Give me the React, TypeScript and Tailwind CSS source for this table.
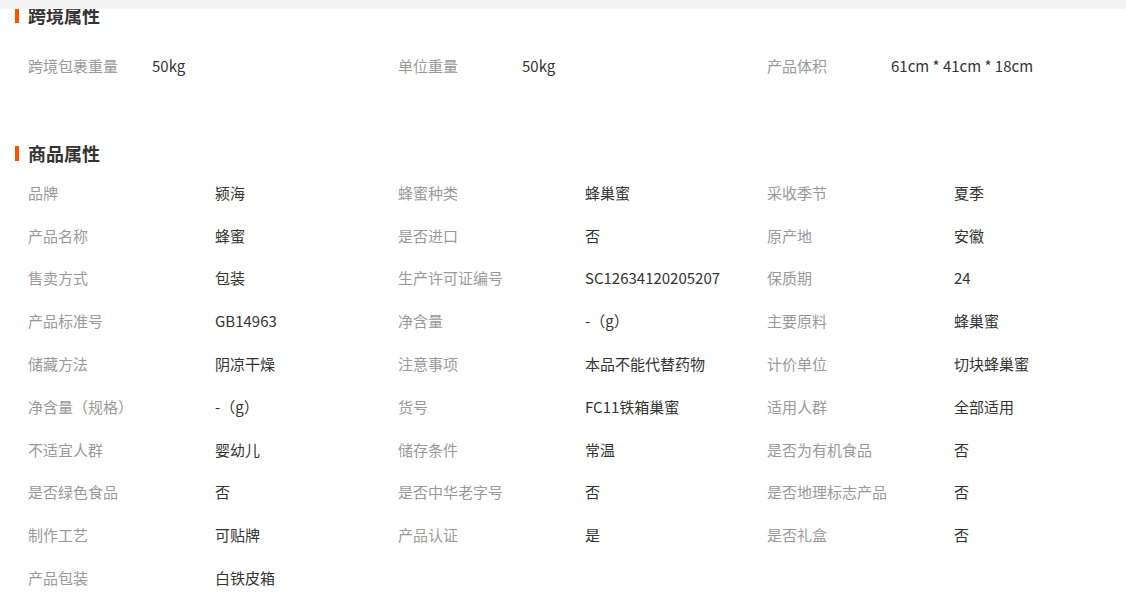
import React from "react";

const font = { fontFamily: '"Noto Sans CJK SC", "Noto Sans", sans-serif' };

type Pair = [string, string];

const cross: Pair[] = [
  ["跨境包裹重量", "50kg"],
  ["单位重量", "50kg"],
  ["产品体积", "61cm * 41cm * 18cm"],
];

const attrs: Pair[] = [
  ["品牌", "颍海"],
  ["蜂蜜种类", "蜂巢蜜"],
  ["采收季节", "夏季"],
  ["产品名称", "蜂蜜"],
  ["是否进口", "否"],
  ["原产地", "安徽"],
  ["售卖方式", "包装"],
  ["生产许可证编号", "SC12634120205207"],
  ["保质期", "24"],
  ["产品标准号", "GB14963"],
  ["净含量", "-（g）"],
  ["主要原料", "蜂巢蜜"],
  ["储藏方法", "阴凉干燥"],
  ["注意事项", "本品不能代替药物"],
  ["计价单位", "切块蜂巢蜜"],
  ["净含量（规格）", "-（g）"],
  ["货号", "FC11铁箱巢蜜"],
  ["适用人群", "全部适用"],
  ["不适宜人群", "婴幼儿"],
  ["储存条件", "常温"],
  ["是否为有机食品", "否"],
  ["是否绿色食品", "否"],
  ["是否中华老字号", "否"],
  ["是否地理标志产品", "否"],
  ["制作工艺", "可贴牌"],
  ["产品认证", "是"],
  ["是否礼盒", "否"],
  ["产品包装", "白铁皮箱"],
];

function Title({ text }: { text: string }) {
  return (
    <div className="flex h-[24px] items-center">
      <span className="ml-[15px] mr-[9px] h-[15px] w-[4px] bg-[#ff5000]" />
      <span className="text-[18px] font-bold leading-[24px] text-[#333]">{text}</span>
    </div>
  );
}

export default function App() {
  return (
    <div className="relative min-h-[609px] w-[1126px] bg-white" style={font}>
      <div className="absolute left-0 top-0 z-10 h-[9px] w-full bg-[#f4f4f4]" />
      <div className="pt-[3px]">
        <Title text="跨境属性" />
        <div className="ml-[28px] mt-[18px] grid grid-cols-[370px_369px_1fr]">
          {cross.map(([k, v]) => (
            <div key={k} className="flex h-[43px] items-center text-[15px]">
              <span className="w-[124px] shrink-0 text-[#999]">{k}</span>
              <span className="text-[#333]">{v}</span>
            </div>
          ))}
        </div>
        <div className="mt-[53px]">
          <Title text="商品属性" />
        </div>
        <div className="ml-[28px] mt-[6.6px] grid grid-cols-[370px_369px_1fr]">
          {attrs.map(([k, v], i) => (
            <div key={k + i} className="flex h-[42.8px] items-center text-[15px]">
              <span className="w-[187px] shrink-0 text-[#999]">{k}</span>
              <span className="text-[#333]">{v}</span>
            </div>
          ))}
        </div>
      </div>
    </div>
  );
}
